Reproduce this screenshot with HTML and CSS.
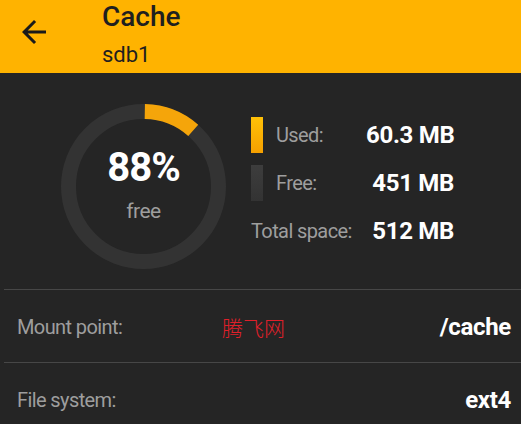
FILE: index.html
```html
<!DOCTYPE html>
<html lang="en">
<head>
    <meta charset="UTF-8">
    <meta name="viewport" content="width=device-width, initial-scale=1.0">
    <title>Cache</title>
    <link rel="stylesheet" href="styles.css">
</head>
<body>
    <header class="app-bar">
        <svg class="back-icon" viewBox="0 0 24 24" width="36" height="36">
            <path d="M20 11H7.83l5.59-5.59L12 4l-8 8 8 8 1.41-1.41L7.83 13H20v-2z" fill="#1a1a1a"/>
        </svg>
        <div class="titles">
            <h1 class="title">Cache</h1>
            <div class="subtitle">sdb1</div>
        </div>
    </header>

    <section class="usage">
        <div class="ring">
            <svg viewBox="0 0 165 165" width="165" height="165">
                <circle cx="82.5" cy="82.5" r="75" fill="none" stroke="#333333" stroke-width="15"/>
                <circle cx="82.5" cy="82.5" r="75" fill="none" stroke="#f5a50a" stroke-width="15"
                        stroke-dasharray="53 471" transform="rotate(-89 82.5 82.5)"/>
            </svg>
            <div class="ring-text">
                <div class="percent">88%</div>
                <div class="percent-label">free</div>
            </div>
        </div>

        <div class="stats">
            <div class="stat-label"><span class="swatch used"></span>Used:</div>
            <div class="stat-value">60.3 MB</div>
            <div class="stat-label"><span class="swatch free"></span>Free:</div>
            <div class="stat-value">451 MB</div>
            <div class="stat-label">Total space:</div>
            <div class="stat-value">512 MB</div>
        </div>
    </section>

    <div class="info-row">
        <span class="info-label">Mount point:</span>
        <span class="watermark">腾飞网</span>
        <span class="info-value">/cache</span>
    </div>
    <div class="info-row">
        <span class="info-label">File system:</span>
        <span></span>
        <span class="info-value">ext4</span>
    </div>
</body>
</html>
```

FILE: styles.css
```css
body {
    margin: 0;
    background-color: #252525;
    font-family: 'Roboto', 'Noto Sans', sans-serif;
    color: #ffffff;
    overflow: hidden;
}

.app-bar {
    background-color: #ffb300;
    height: 73px;
    display: flex;
    align-items: flex-start;
    color: #1f1f1f;
}

.back-icon {
    margin: 14px 0 0 16px;
}

.titles {
    margin-left: 50px;
}

.title {
    margin: 0;
    font-size: 28px;
    font-weight: 500;
    line-height: 34px;
}

.subtitle {
    margin-top: 9px;
    font-size: 22px;
    line-height: 24px;
}

.usage {
    height: 216px;
    display: flex;
    align-items: center;
    padding-left: 61px;
    box-sizing: border-box;
    padding-top: 10px;
}

.ring {
    display: grid;
    width: 165px;
    height: 165px;
}

.ring svg,
.ring-text {
    grid-area: 1 / 1;
}

.ring-text {
    display: flex;
    flex-direction: column;
    align-items: center;
    justify-content: center;
    padding-bottom: 4px;
}

.percent {
    font-size: 40px;
    font-weight: 700;
    letter-spacing: -1px;
    line-height: 44px;
}

.percent-label {
    font-size: 21px;
    letter-spacing: -0.5px;
    color: #9e9e9e;
    margin-top: 9px;
}

.stats {
    margin-left: 25px;
    display: grid;
    grid-template-columns: 115px 88px;
    grid-auto-rows: 36px;
    row-gap: 12px;
    align-items: center;
    margin-top: -6px;
}

.stat-label {
    display: flex;
    align-items: center;
    gap: 13px;
    font-size: 20px;
    letter-spacing: -0.6px;
    color: #9e9e9e;
    height: 36px;
    white-space: nowrap;
}

.swatch {
    width: 12px;
    height: 36px;
    flex-shrink: 0;
}

.swatch.used {
    background: linear-gradient(#ffc107, #f5a000);
}

.swatch.free {
    background: linear-gradient(#3d3d3d, #333333);
}

.stat-value {
    font-size: 24px;
    font-weight: 700;
    letter-spacing: -0.3px;
    text-align: right;
    white-space: nowrap;
}

.info-row {
    margin-left: 4px;
    height: 73px;
    border-top: 1px solid #474747;
    display: grid;
    grid-template-columns: 205px auto 1fr;
    align-items: center;
    padding: 2px 10px 0 13px;
    box-sizing: border-box;
}

.info-label {
    font-size: 20px;
    letter-spacing: -0.6px;
    color: #9e9e9e;
}

.watermark {
    font-family: 'Noto Sans CJK SC', sans-serif;
    font-weight: 300;
    font-size: 21px;
    color: #e0202a;
}

.info-value {
    font-size: 24px;
    font-weight: 700;
    letter-spacing: -0.3px;
    text-align: right;
}
```
